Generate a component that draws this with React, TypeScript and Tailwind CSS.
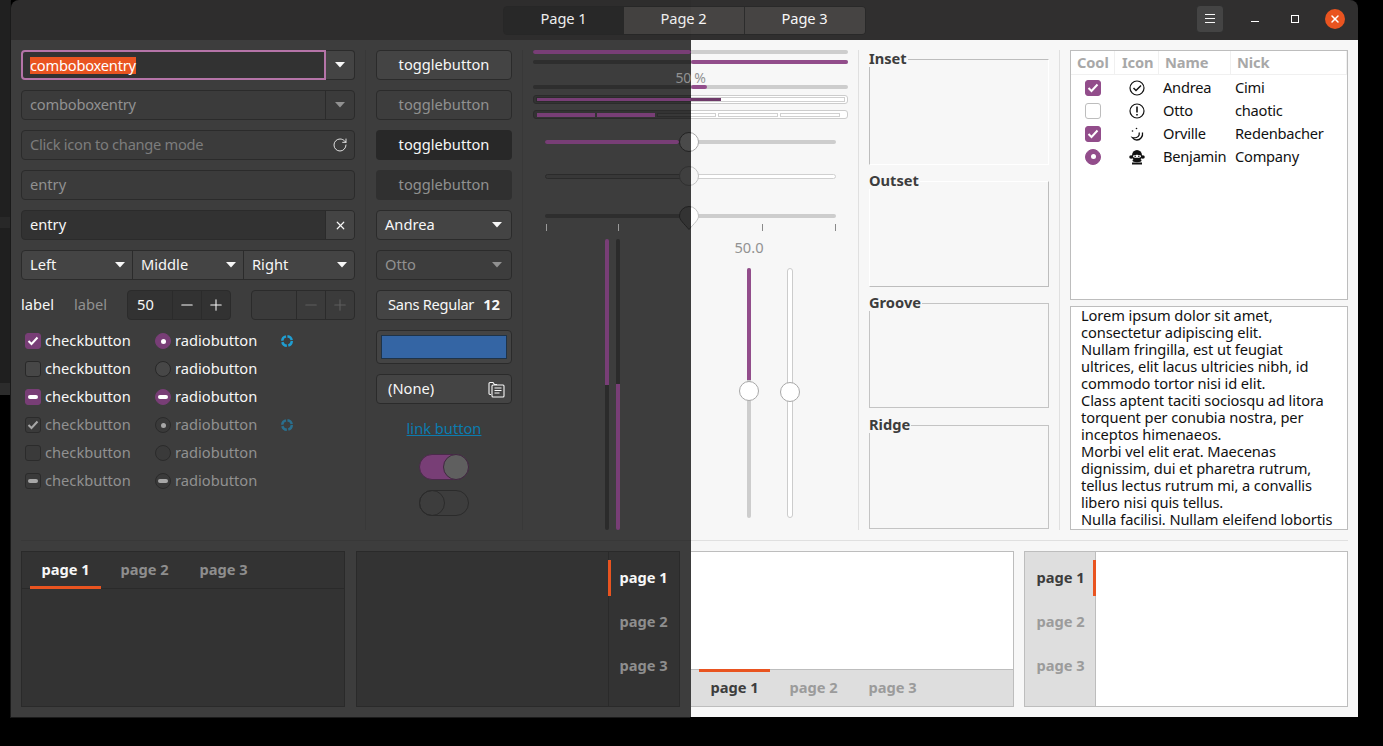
import React from 'react';
import { RotateCw, X, Plus, Minus } from 'lucide-react';

type Theme = {
  root: string; text: string; dim: string; entry: string; entryDim: string; border: string; button: string;
  buttonDim: string; pressed: string; pressedDim: string; sep: string; track: string; fill: string; sub: string;
  inner: string; thumb: string; thumbDim: string; boxOn: string; box: string; boxDim: string; glyph: string;
  glyphDim: string; page: string; tabs: string; tabDim: string; rule: string; bar: string; barOff: string;
  levelFill: string; tick: string; mark: string; markFill: string;
};

const dark: Theme = {
  root: 'bg-[#3d3d3d] text-[#f7f7f7]',
  text: 'text-[#f7f7f7]',
  dim: 'text-[#919191]',
  entry: 'bg-[#323232]',
  entryDim: 'bg-[#3b3b3b]',
  border: 'border-[#2b2b2b]',
  button: 'bg-[#444444]',
  buttonDim: 'bg-[#3d3d3d]',
  pressed: 'bg-[#282828]',
  pressedDim: 'bg-[#303030]',
  sep: 'bg-[#383838]',
  track: 'bg-[#2e2e2e]',
  fill: 'bg-[#783e76]',
  sub: 'bg-[#333333] border-[#2b2b2b]',
  inner: 'bg-[#383838] border-[#2b2b2b]',
  thumb: 'bg-[#4a4a4a] border-[#222222]',
  thumbDim: 'bg-[#3f3f3f] border-[#303030]',
  boxOn: 'bg-[#783e76] border-[#783e76]',
  box: 'bg-[#474747] border-[#282828]',
  boxDim: 'bg-[#3a3a3a] border-[#2b2b2b]',
  glyph: 'text-white',
  glyphDim: 'text-[#a8a8a8]',
  page: 'bg-[#333333]',
  tabs: 'bg-[#333333]',
  tabDim: 'text-[#8e8e8e]',
  rule: 'border-[#2a2a2a]',
  bar: 'bg-[#783e76]',
  barOff: 'bg-[#2b2b2b]',
  levelFill: 'bg-[#783e76]',
  tick: 'bg-[#9a9a9a]',
  mark: '#202020',
  markFill: '#333333',
};

const light: Theme = {
  root: 'bg-[#f7f7f7] text-[#3d3d3d]',
  text: 'text-[#3d3d3d]',
  dim: 'text-[#929292]',
  entry: 'bg-white',
  entryDim: 'bg-[#f1f1f1]',
  border: 'border-[#bdbdbd]',
  button: 'bg-[#f0f0f0]',
  buttonDim: 'bg-[#f7f7f7]',
  pressed: 'bg-[#d0d0d0]',
  pressedDim: 'bg-[#dddddd]',
  sep: 'bg-[#e0e0e0]',
  track: 'bg-[#cdcdcd]',
  fill: 'bg-[#924d8b]',
  sub: 'bg-white border-[#cccccc]',
  inner: 'bg-white border-[#d0d0d0]',
  thumb: 'bg-white border-[#a8a8a8]',
  thumbDim: 'bg-[#f7f7f7] border-[#c4c4c4]',
  boxOn: 'bg-[#924d8b] border-[#924d8b]',
  box: 'bg-white border-[#bdbdbd]',
  boxDim: 'bg-[#f1f1f1] border-[#cccccc]',
  glyph: 'text-white',
  glyphDim: 'text-[#888888]',
  page: 'bg-white',
  tabs: 'bg-[#dedede]',
  tabDim: 'text-[#9b9b9b]',
  rule: 'border-[#bdbdbd]',
  bar: 'bg-[#924d8b]',
  barOff: 'bg-[#cdcdcd]',
  levelFill: 'bg-[#6e3a69]',
  tick: 'bg-[#8a8a8a]',
  mark: '#c4c4c4',
  markFill: '#ffffff',
};

const Caret = ({ dim }: { dim?: boolean }) => (
  <svg width="10" height="6" viewBox="0 0 10 6" className={`mt-[2px] ${dim ? 'text-[#919191]' : 'text-[#f7f7f7]'}`}>
    <path d="M0 0h10L5 5.500z" fill="currentColor" />
  </svg>
);

function Entry({ t, children, right, dim, clear, icon }: { t: Theme; children: React.ReactNode; right?: React.ReactNode; dim?: boolean; clear?: boolean; icon?: React.ReactNode }) {
  return (
    <div className={`flex h-[30px] rounded-[4px] border ${t.border} ${dim ? t.entryDim : t.entry}`}>
      <div className={`flex flex-1 items-center pb-[2px] pl-[8px] ${dim ? t.dim : t.text}`}>{children}</div>
      {icon && <div className="flex w-[29px] items-center justify-center pl-[1px]">{icon}</div>}
      {right && (
        <div className={`flex w-[29px] items-center justify-center rounded-r-[3px] border-l pb-[2px] ${t.border} ${clear ? t.button : ''}`}>{right}</div>
      )}
    </div>
  );
}

function Spin({ t, value, dim }: { t: Theme; value?: string; dim?: boolean }) {
  const icon = dim ? 'text-[#5f5f5f]' : t.text;
  return (
    <div className={`flex h-[30px] w-[104px] rounded-[4px] border ${t.border} ${dim ? t.entryDim : t.entry}`}>
      <div className={`flex flex-1 items-center pb-[2px] pl-[9px] ${t.text}`}>{value}</div>
      <div className={`flex w-[29px] items-center justify-center border-l ${t.border} ${icon}`}><Minus size={18} strokeWidth={1.4} /></div>
      <div className={`flex w-[29px] items-center justify-center border-l ${t.border} ${icon}`}><Plus size={18} strokeWidth={1.4} /></div>
    </div>
  );
}

function Check({ t, state, dim, round }: { t: Theme; state: 'on' | 'off' | 'mixed'; dim?: boolean; round?: boolean }) {
  const box = dim ? t.boxDim : state === 'off' ? t.box : t.boxOn;
  const glyph = dim ? t.glyphDim : t.glyph;
  return (
    <span className={`flex h-4 w-4 shrink-0 items-center justify-center border ${round ? 'rounded-full' : 'rounded-[3px]'} ${box} ${glyph}`}>
      {state === 'on' && !round && (
        <svg width="12" height="10" viewBox="0 0 12 10"><path d="M1.500 5l3 3 6-6.500" fill="none" stroke="currentColor" strokeWidth="2" /></svg>
      )}
      {state === 'on' && round && <span className="h-[5px] w-[5px] rounded-full bg-current" />}
      {state === 'mixed' && <span className="h-[4px] w-[10px] rounded-[2px] bg-current" />}
    </span>
  );
}

const Spinner = ({ dim }: { dim?: boolean }) => (
  <svg width="14" height="14" viewBox="0 0 14 14" className={dim ? 'text-[#2a6f8e]' : 'text-[#1f9ed2]'}>
    <circle cx="7" cy="7" r="4.800" fill="none" stroke="currentColor" strokeWidth="2.400" strokeDasharray="6 1.500" />
  </svg>
);

function Button({ t, children, dim, pressed, className = '' }: { t: Theme; children: React.ReactNode; dim?: boolean; pressed?: boolean; className?: string }) {
  const bg = pressed ? (dim ? t.pressedDim : t.pressed) : dim ? t.buttonDim : t.button;
  return (
    <div className={`flex h-[30px] items-center rounded-[4px] border pb-[2px] ${pressed ? 'border-transparent' : t.border} ${bg} ${dim ? t.dim : t.text} ${className}`}>
      {children}
    </div>
  );
}

function Track({ t, from = 0, to = 0 }: { t: Theme; from?: number; to?: number }) {
  return (
    <div className={`relative h-[4px] w-full rounded-full ${t.track}`}>
      <div className={`absolute inset-y-0 rounded-full ${t.fill}`} style={{ left: from, width: to - from }} />
    </div>
  );
}

function Slider({ t, to, dim, marks }: { t: Theme; to?: number; dim?: boolean; marks?: boolean }) {
  return (
    <div className="relative mx-[12px] flex h-[20px] items-center">
      {dim ? <div className={`h-[5px] w-full rounded-full border ${t.inner}`} /> : <Track t={t} to={to} />}
      {marks ? (
        <svg width="22" height="26" viewBox="0 0 22 26" className="absolute left-[133px] top-[-1px]">
          <path d="M1.500 11a9.500 9.500 0 0119 0c0 4-4 7-9.500 13.500C5.500 18 1.500 15 1.500 11z" fill={t.markFill} stroke={t.mark} />
        </svg>
      ) : (
        <div className={`absolute left-[134px] h-[20px] w-[20px] rounded-full border ${dim ? t.thumbDim : t.thumb}`} />
      )}
      {marks && [1, 73, 217, 290].map((x) => <span key={x} className={`absolute top-[18px] h-[7px] w-px ${t.tick}`} style={{ left: x }} />)}
    </div>
  );
}

function VSlider({ t, fill, label }: { t: Theme; fill?: boolean; label?: string }) {
  return (
    <div className="flex w-[20px] flex-col items-center">
      <div className={`flex h-[29px] items-center whitespace-nowrap pb-[14px] ${t.dim}`}>{label}</div>
      <div className={`relative h-[250px] rounded-full ${fill ? `w-[4px] ${t.track}` : `w-[6px] border ${t.sub}`}`}>
        {fill && <div className={`h-[112px] rounded-t-full ${t.fill}`} />}
        <div className={`absolute left-1/2 top-[113px] h-[20px] w-[20px] -translate-x-1/2 rounded-full border ${t.thumb}`} />
      </div>
    </div>
  );
}

function Frame({ title, borders, className = '' }: { title: string; borders: string; className?: string }) {
  return (
    <div className={`relative pt-[9px] ${className}`}>
      <div className={`h-full w-full border ${borders}`} />
      <span className="absolute left-0 top-[-1px] bg-[#f7f7f7] pr-[1px] font-bold leading-[18px] text-[#3d3d3d]">{title}</span>
    </div>
  );
}

function Tab({ t, label, active, side }: { t: Theme; label: string; active?: boolean; side: 'top' | 'bottom' | 'left' | 'right' }) {
  const bar = active ? 'border-[#e95420]' : 'border-transparent';
  const place = {
    top: `-mb-px h-[37px] w-[71px] border-b-[3px] ${bar}`,
    bottom: `-mt-px h-[37px] w-[71px] border-t-[3px] pb-[4px] ${bar}`,
    left: `-mr-px h-[36px] border-r-[3px] pb-[2px] pl-[3px] ${bar}`,
    right: `-ml-px h-[36px] border-l-[3px] pb-[2px] pr-[3px] ${bar}`,
  }[side];
  return <div className={`flex items-center justify-center font-bold ${place} ${active ? t.text : t.tabDim}`}>{label}</div>;
}

function Notebook({ t, side, className }: { t: Theme; side: 'top' | 'bottom' | 'left' | 'right'; className: string }) {
  const tabs = ['page 1', 'page 2', 'page 3'].map((p, i) => <Tab key={p} t={t} label={p} active={i === 0} side={side} />);
  const layout = {
    top: 'flex-col',
    bottom: 'flex-col-reverse',
    left: 'flex-row',
    right: 'flex-row-reverse',
  }[side];
  const strip = {
    top: `h-[37px] items-end border-b px-[8px] ${t.rule}`,
    bottom: `h-[37px] items-start border-t px-[8px] ${t.rule}`,
    left: `w-[71px] flex-col border-r pt-[8px] ${t.rule}`,
    right: `w-[71px] flex-col border-l pt-[8px] ${t.rule}`,
  }[side];
  return (
    <div className={`flex h-[156px] border ${t.rule} ${t.page} ${layout} ${className}`}>
      <div className={`flex shrink-0 gap-[8px] ${strip} ${t.tabs}`}>{tabs}</div>
      <div className="flex-1" />
    </div>
  );
}

const treeRows = [
  { state: 'on' as const, round: false, icon: 'ok', name: 'Andrea', nick: 'Cimi' },
  { state: 'off' as const, round: false, icon: 'warn', name: 'Otto', nick: 'chaotic' },
  { state: 'on' as const, round: false, icon: 'moon', name: 'Orville', nick: 'Redenbacher' },
  { state: 'on' as const, round: true, icon: 'monkey', name: 'Benjamin', nick: 'Company' },
];

function FaceIcon({ kind }: { kind: string }) {
  if (kind === 'ok') {
    return (
      <svg width="16" height="16" viewBox="0 0 16 16" fill="none" stroke="#111" strokeWidth="1.200">
        <circle cx="8" cy="8" r="7" />
        <path d="M4.500 8l2.500 2.500 5-5" strokeWidth="1.500" />
      </svg>
    );
  }
  if (kind === 'warn') {
    return (
      <svg width="16" height="16" viewBox="0 0 16 16" fill="none" stroke="#111" strokeWidth="1.200">
        <circle cx="8" cy="8" r="7" />
        <path d="M8 3.500v6M8 11v1.500" strokeWidth="1.600" />
      </svg>
    );
  }
  if (kind === 'moon') {
    return (
      <svg width="16" height="16" viewBox="0 0 16 16" fill="none" stroke="#111" strokeWidth="1.300">
        <path d="M13.500 6.500c.7 4-2.200 7.500-5.700 7.500-2 0-3.600-1-4.600-2.500 3 1 6-.2 6.800-2.300.4-1 .3-1.800.1-2.700" />
        <circle cx="3.500" cy="5" r=".8" fill="#111" stroke="none" />
        <circle cx="7.500" cy="2.500" r=".8" fill="#111" stroke="none" />
      </svg>
    );
  }
  return (
    <svg width="16" height="16" viewBox="0 0 16 16">
      <ellipse cx="8" cy="6.500" rx="5" ry="5.500" fill="#111" />
      <ellipse cx="2.200" cy="8" rx="2" ry="1.700" fill="#111" />
      <ellipse cx="13.800" cy="8" rx="2" ry="1.700" fill="#111" />
      <ellipse cx="8" cy="7.300" rx="4" ry="1.500" fill="#fff" />
      <circle cx="6.200" cy="7.200" r=".8" fill="#111" />
      <circle cx="9.800" cy="7.200" r=".8" fill="#111" />
      <ellipse cx="8" cy="11.500" rx="4.500" ry="1.700" fill="#111" />
      <path d="M3 14.500h10" stroke="#111" strokeWidth="2" />
    </svg>
  );
}

function TreeView() {
  const heads = [
    ['Cool', 'w-[44px] pl-[6px]'],
    ['Icon', 'w-[44px] pl-[7px]'],
    ['Name', 'w-[72px] pl-[6px]'],
    ['Nick', 'flex-1 pl-[6px]'],
  ];
  return (
    <div className="h-[250px] border border-[#bdbdbd] bg-white">
      <div className="flex h-[24px] border-b border-[#f0f0f0] font-bold tracking-[-0.1px] text-[#a8a8a8]">
        {heads.map(([h, w]) => (
          <div key={h} className={`flex items-center border-r border-[#f0f0f0] pb-[2px] ${w}`}>{h}</div>
        ))}
      </div>
      <div className="pt-[1px] tracking-[-0.25px] text-[#111111]">
        {treeRows.map((r) => (
          <div key={r.name} className="flex h-[23px] items-center">
            <div className="flex w-[44px] justify-center"><Check t={light} state={r.state} round={r.round} /></div>
            <div className="flex w-[44px] justify-center"><FaceIcon kind={r.icon} /></div>
            <div className="-mt-[2px] w-[72px] pl-[4px]">{r.name}</div>
            <div className="-mt-[2px] pl-[4px]">{r.nick}</div>
          </div>
        ))}
      </div>
    </div>
  );
}

const lorem = [
  'Lorem ipsum dolor sit amet,',
  'consectetur adipiscing elit.',
  'Nullam fringilla, est ut feugiat',
  'ultrices, elit lacus ultricies nibh, id',
  'commodo tortor nisi id elit.',
  'Class aptent taciti sociosqu ad litora',
  'torquent per conubia nostra, per',
  'inceptos himenaeos.',
  'Morbi vel elit erat. Maecenas',
  'dignissim, dui et pharetra rutrum,',
  'tellus lectus rutrum mi, a convallis',
  'libero nisi quis tellus.',
  'Nulla facilisi. Nullam eleifend lobortis',
];

function EntryColumn({ t }: { t: Theme }) {
  const states = ['on', 'off', 'mixed', 'on', 'off', 'mixed'] as const;
  return (
    <div className="flex w-[334px] flex-col gap-[10px]">
      <div className="flex h-[30px]">
        <div className="flex flex-1 items-center rounded-l-[4px] border-2 border-[#b574a8] bg-[#323232] pl-[7px]">
          <span className="inline-block bg-[#e95420] leading-[17px] tracking-[-0.22px] text-white">comboboxentry</span>
        </div>
        <div className={`flex w-[29px] items-center justify-center rounded-r-[4px] border border-l-0 pb-[2px] ${t.border} ${t.button}`}><Caret /></div>
      </div>
      <Entry t={t} dim right={<Caret dim />}><span className="tracking-[-0.22px]">comboboxentry</span></Entry>
      <Entry t={t} dim icon={<RotateCw size={16} strokeWidth={1.300} className="text-[#f7f7f7]" />}>
        <span className="tracking-[-0.28px] text-[#7d7d7d]">Click icon to change mode</span>
      </Entry>
      <Entry t={t} dim>entry</Entry>
      <Entry t={t} clear right={<X size={13} strokeWidth={2.200} className="mt-[2px]" />}>entry</Entry>
      <div className={`flex h-[30px] rounded-[4px] border ${t.border} ${t.button}`}>
        {['Left', 'Middle', 'Right'].map((s, i) => (
          <div key={s} className={`flex flex-1 items-center justify-between pb-[2px] pl-[8px] pr-[7px] ${i > 0 ? `border-l ${t.border}` : ''}`}>
            {s}
            <Caret />
          </div>
        ))}
      </div>
      <div className="flex items-center">
        <span className="-mt-[2px] w-[53px]">label</span>
        <span className={`-mt-[2px] w-[53px] ${t.dim}`}>label</span>
        <Spin t={t} value="50" />
        <span className="w-[20px]" />
        <Spin t={t} dim />
      </div>
      <div className="-mt-[3px] flex pl-[4px]">
        <div className="flex w-[130px] flex-col">
          {states.map((s, i) => (
            <div key={i} className={`flex h-[28px] items-center gap-[4px] ${i > 2 ? t.dim : ''}`}>
              <Check t={t} state={s} dim={i > 2} />
              <span className="-mt-[2px]">checkbutton</span>
            </div>
          ))}
        </div>
        <div className="flex w-[125px] flex-col">
          {states.map((s, i) => (
            <div key={i} className={`flex h-[28px] items-center gap-[4px] ${i > 2 ? t.dim : ''}`}>
              <Check t={t} state={s} dim={i > 2} round />
              <span className="-mt-[2px]">radiobutton</span>
            </div>
          ))}
        </div>
        <div className="flex flex-col">
          <div className="flex h-[84px] items-start pt-[7px]"><Spinner /></div>
          <div className="flex pt-[7px]"><Spinner dim /></div>
        </div>
      </div>
    </div>
  );
}

function ButtonColumn({ t }: { t: Theme }) {
  return (
    <div className="flex w-[136px] flex-col">
      <div className="flex flex-col gap-[10px]">
        <Button t={t} className="justify-center">togglebutton</Button>
        <Button t={t} dim className="justify-center">togglebutton</Button>
        <Button t={t} pressed className="justify-center">togglebutton</Button>
        <Button t={t} pressed dim className="justify-center">togglebutton</Button>
        <Button t={t} className="justify-between pl-[8px] pr-[9px]">Andrea<Caret /></Button>
        <Button t={t} dim className="justify-between pl-[8px] pr-[9px]">Otto<Caret dim /></Button>
        <Button t={t} className="justify-between pl-[11px] pr-[11px]">
          <span className="tracking-[-0.3px]">Sans Regular</span>
          <span className="font-bold">12</span>
        </Button>
        <div className={`flex h-[34px] items-center justify-center rounded-[4px] border ${t.border} ${t.button}`}>
          <div className="h-[24px] w-[126px] border border-[#1f3347] bg-[#3465a4]" />
        </div>
        <Button t={t} className="justify-between pl-[11px] pr-[6px]">
          (None)
          <svg width="17" height="17" viewBox="0 0 17 17" fill="none" stroke="currentColor" strokeWidth="1.100" className="mt-[2px]">
            <path d="M3 13.500H2a1 1 0 01-1-1V2.500a1 1 0 011-1h3l1.500 2H9" />
            <rect x="4" y="4" width="12" height="12" rx="1" />
            <path d="M6.500 7h7M6.500 9.500h7M6.500 12h5" />
          </svg>
        </Button>
      </div>
      <div className="flex h-[50px] items-center justify-center pb-[2px]"><span className="text-[#0b7cb0] underline">link button</span></div>
      <div className="flex flex-col items-center gap-[10px]">
        <div className="relative h-[26px] w-[50px] rounded-full border border-[#4a2a4a] bg-[#783e76]">
          <div className="absolute right-[-1px] top-[-1px] h-[26px] w-[26px] rounded-full border border-[#402840] bg-[#5f5f5f]" />
        </div>
        <div className="relative h-[26px] w-[50px] rounded-full border border-[#2b2b2b]">
          <div className="absolute left-[-1px] top-[-1px] h-[26px] w-[26px] rounded-full border border-[#2b2b2b]" />
        </div>
      </div>
    </div>
  );
}

function RangeColumn({ t, isDark }: { t: Theme; isDark: boolean }) {
  return (
    <div className="flex w-[315px] flex-col">
      <Track t={t} to={158} />
      <div className={`relative mt-[6px] h-[4px] rounded-full ${t.track}`}>
        <div className={`absolute inset-y-0 left-[158px] right-0 rounded-full ${t.fill}`} />
      </div>
      <div className={`flex h-[21px] items-center justify-center pt-[7px] text-[14px] leading-none tracking-[-0.3px] ${t.dim}`}>50 %</div>
      <Track t={t} from={158} to={174} />
      <div className={`mt-[6px] flex h-[9px] items-center rounded-[3px] border px-[2px] ${t.sub}`}>
        <div className={`h-[5px] w-full border ${t.inner}`}>
          <div className={`h-full w-[184px] ${t.levelFill}`} />
        </div>
      </div>
      <div className={`mt-[6px] flex h-[9px] items-center gap-[2px] rounded-[3px] border pl-[3px] pr-[7px] ${t.sub}`}>
        {[0, 1, 2, 3, 4].map((i) => (
          <div key={i} className={`h-[4px] flex-1 ${i < 2 ? t.fill : `border ${t.inner}`}`} />
        ))}
      </div>
      <div className="mt-[13px]"><Slider t={t} to={134} /></div>
      <div className="mt-[14px]"><Slider t={t} dim /></div>
      <div className="mt-[20px]"><Slider t={t} marks /></div>
      <div className="mt-[13px] flex h-[291px]">
        <div className="ml-[72px] flex w-[4px] flex-col">
          <div className={`h-[146px] rounded-t-full ${t.bar}`} />
          <div className={`flex-1 rounded-b-full ${t.barOff}`} />
        </div>
        <div className="ml-[7px] flex w-[4px] flex-col">
          <div className={`h-[145px] rounded-t-full ${t.barOff}`} />
          <div className={`flex-1 rounded-b-full ${t.bar}`} />
        </div>
        {!isDark && (
          <>
            <div className="ml-[119px]"><VSlider t={t} fill label="50.0" /></div>
            <div className="ml-[21px]"><VSlider t={t} /></div>
          </>
        )}
      </div>
    </div>
  );
}

// the two halves share one layout, each layer only draws what shows through it
function Gallery({ t }: { t: Theme }) {
  const isDark = t === dark;
  return (
    <div className={`flex h-[677px] w-[1347px] flex-col pl-[10px] pt-[10px] ${t.root}`}>
      <div className="flex h-[480px]">
        <div className="flex w-[512px] shrink-0">
          {isDark && (
            <>
              <EntryColumn t={t} />
              <div className={`mx-[10px] w-px ${t.sep}`} />
              <ButtonColumn t={t} />
              <div className={`mx-[10px] w-px ${t.sep}`} />
            </>
          )}
        </div>
        <RangeColumn t={t} isDark={isDark} />
        {!isDark && (
          <>
            <div className={`mx-[10px] w-px ${t.sep}`} />
            <div className="flex w-[180px] flex-col">
              <Frame title="Inset" className="h-[115px]" borders="border-t-[#bdbdbd] border-l-[#bdbdbd] border-r-white border-b-white" />
              <Frame title="Outset" className="mt-[7px] h-[115px]" borders="border-t-white border-l-white border-r-[#bdbdbd] border-b-[#bdbdbd]" />
              <Frame title="Groove" className="mt-[7px] h-[114px]" borders="border-[#c4c4c4]" />
              <Frame title="Ridge" className="mt-[8px] h-[113px]" borders="border-[#c4c4c4]" />
            </div>
            <div className={`mx-[10px] w-px ${t.sep}`} />
            <div className="flex w-[278px] flex-col gap-[6px]">
              <TreeView />
              <div className="h-[224px] overflow-hidden border border-[#bdbdbd] bg-white pl-[10px] leading-[17px] tracking-[-0.1px] text-[#111111]">
                {lorem.map((l) => <div key={l} className="whitespace-nowrap">{l}</div>)}
              </div>
            </div>
          </>
        )}
      </div>

      <div className={`mt-[10px] h-px w-[1327px] ${t.sep}`} />

      {isDark ? (
        <div className="mt-[10px] flex">
          <Notebook t={t} side="top" className="w-[324px]" />
          <Notebook t={t} side="right" className="ml-[11px] w-[324px]" />
        </div>
      ) : (
        <div className="mt-[10px] flex pl-[669px]">
          <Notebook t={t} side="bottom" className="w-[324px]" />
          <Notebook t={t} side="left" className="ml-[10px] w-[324px]" />
        </div>
      )}
    </div>
  );
}

function HeaderBar() {
  return (
    <div className="relative flex h-[40px] items-center justify-center rounded-t-[8px] bg-[#302f2f] text-[#f7f7f7]">
      <div className="ml-[-1px] flex h-[29px] w-[363px] overflow-hidden rounded-[4px] border border-[#292929] tracking-[-0.1px]">
        <div className="flex flex-1 items-center justify-center bg-[#2a2a2a] pb-[4px]">Page 1</div>
        <div className="flex flex-1 items-center justify-center bg-[#464443] pb-[4px]">Page 2</div>
        <div className="flex flex-1 items-center justify-center border-l border-[#2c2c2c] bg-[#464443] pb-[4px]">Page 3</div>
      </div>
      <div className="absolute right-[13px] top-[5px] flex h-[28px] items-center">
        <div className="flex h-[28px] w-[28px] items-center justify-center rounded-[4px] border border-[#2f2f2f] bg-[#444444]">
          <svg width="10" height="10" viewBox="0 0 10 10" stroke="#f7f7f7" strokeWidth="1"><path d="M0 .5h10M0 4.500h10M0 8.500h10" /></svg>
        </div>
        <svg width="8" height="8" viewBox="0 0 8 8" className="ml-[27px]" stroke="#fff" strokeWidth="1"><path d="M0 6.500h8" /></svg>
        <div className="ml-[32px] h-[8px] w-[8px] border border-white" />
        <div className="ml-[26px] flex h-[20px] w-[20px] items-center justify-center rounded-full bg-[#e95420] text-white"><X size={12} strokeWidth={3} /></div>
      </div>
    </div>
  );
}

export default function App() {
  return (
    <div className="flex h-[746px] w-[1383px] overflow-hidden bg-black font-['Noto_Sans',sans-serif] text-[14.67px]">
      <div className="flex w-[11px] flex-col">
        <div className="h-[217px] bg-[#202020]" />
        <div className="h-[11px] bg-[#282828]" />
        <div className="h-[155px] bg-[#1f1f1f]" />
        <div className="h-[12px] bg-[#2c2c2c]" />
      </div>
      <div className="relative h-[717px] w-[1347px]">
        <HeaderBar />
        <Gallery t={light} />
        <div className="absolute left-0 top-0 h-[717px] w-[680px] overflow-hidden shadow-[-1px_1px_0_#1a1a1a]">
          <div className="h-[40px] bg-black/[0.04]" />
          <Gallery t={dark} />
        </div>
      </div>
    </div>
  );
}
